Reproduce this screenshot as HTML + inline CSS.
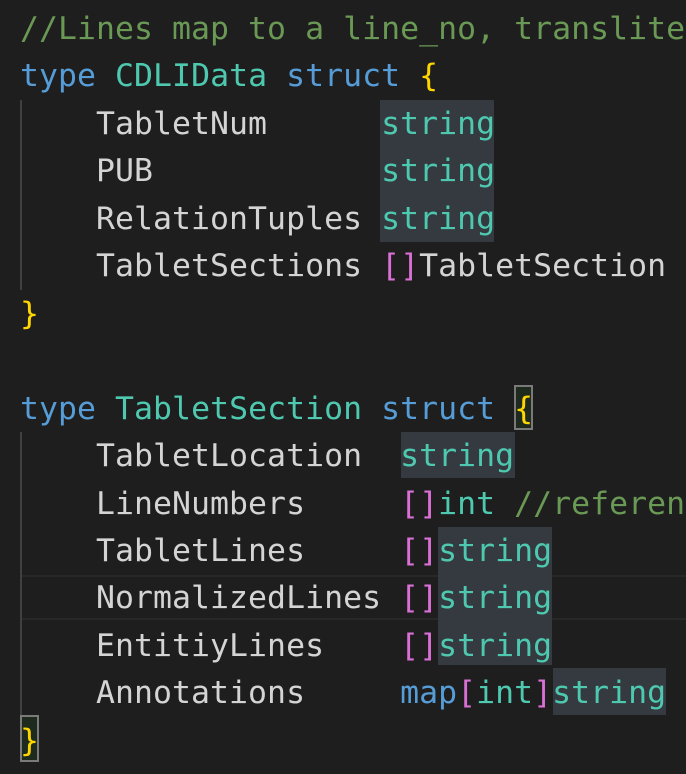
<!DOCTYPE html>
<html><head><style>
html,body{margin:0;padding:0;background:#1e1e1e;width:686px;height:774px;overflow:hidden}
.abs{position:absolute}
pre{position:absolute;left:20px;top:6px;margin:0;font-family:"DejaVu Sans Mono","Liberation Mono",monospace;font-size:31.5px;line-height:47.45px;color:#d4d4d4;letter-spacing:0.04px}
.c{color:#6a9955}.k{color:#569cd6}.t{color:#4ec9b0}.y{color:#ffd700}.m{color:#da70d6}
</style></head><body>
<div class="abs" style="left:22px;top:575px;width:664px;height:45px;border-top:2px solid #282828;border-bottom:2px solid #282828;box-sizing:border-box"></div>
<div class="abs" style="left:380px;top:100px;width:114px;height:142px;background:#343a40"></div>
<div class="abs" style="left:401px;top:432px;width:114px;height:46px;background:#343a40"></div>
<div class="abs" style="left:438px;top:527px;width:114px;height:138px;background:#343a40"></div>
<div class="abs" style="left:553px;top:668px;width:113px;height:47px;background:#343a40"></div>
<div class="abs" style="left:20px;top:100px;width:2px;height:190px;background:#404040"></div>
<div class="abs" style="left:20px;top:432px;width:2px;height:283px;background:#404040"></div>
<div class="abs" style="left:514px;top:385px;width:19px;height:45px;border:2px solid #7a7a7a;box-sizing:border-box;background:#1f2a1f"></div>
<div class="abs" style="left:20px;top:715px;width:19px;height:47px;border:2px solid #7a7a7a;box-sizing:border-box;background:#1f2a1f"></div>
<pre><span class="c">//Lines map to a line_no, translite</span>
<span class="k">type</span> <span class="t">CDLIData</span> <span class="k">struct</span> <span class="y">{</span>
    TabletNum      <span class="t">string</span>
    PUB            <span class="t">string</span>
    RelationTuples <span class="t">string</span>
    TabletSections <span class="m">[]</span>TabletSection
<span class="y">}</span>

<span class="k">type</span> <span class="t">TabletSection</span> <span class="k">struct</span> <span class="y">{</span>
    TabletLocation  <span class="t">string</span>
    LineNumbers     <span class="m">[]</span><span class="t">int</span> <span class="c">//referen</span>
    TabletLines     <span class="m">[]</span><span class="t">string</span>
    NormalizedLines <span class="m">[]</span><span class="t">string</span>
    EntitiyLines    <span class="m">[]</span><span class="t">string</span>
    Annotations     <span class="k">map</span><span class="m">[</span><span class="t">int</span><span class="m">]</span><span class="t">string</span>
<span class="y">}</span></pre>
</body></html>
